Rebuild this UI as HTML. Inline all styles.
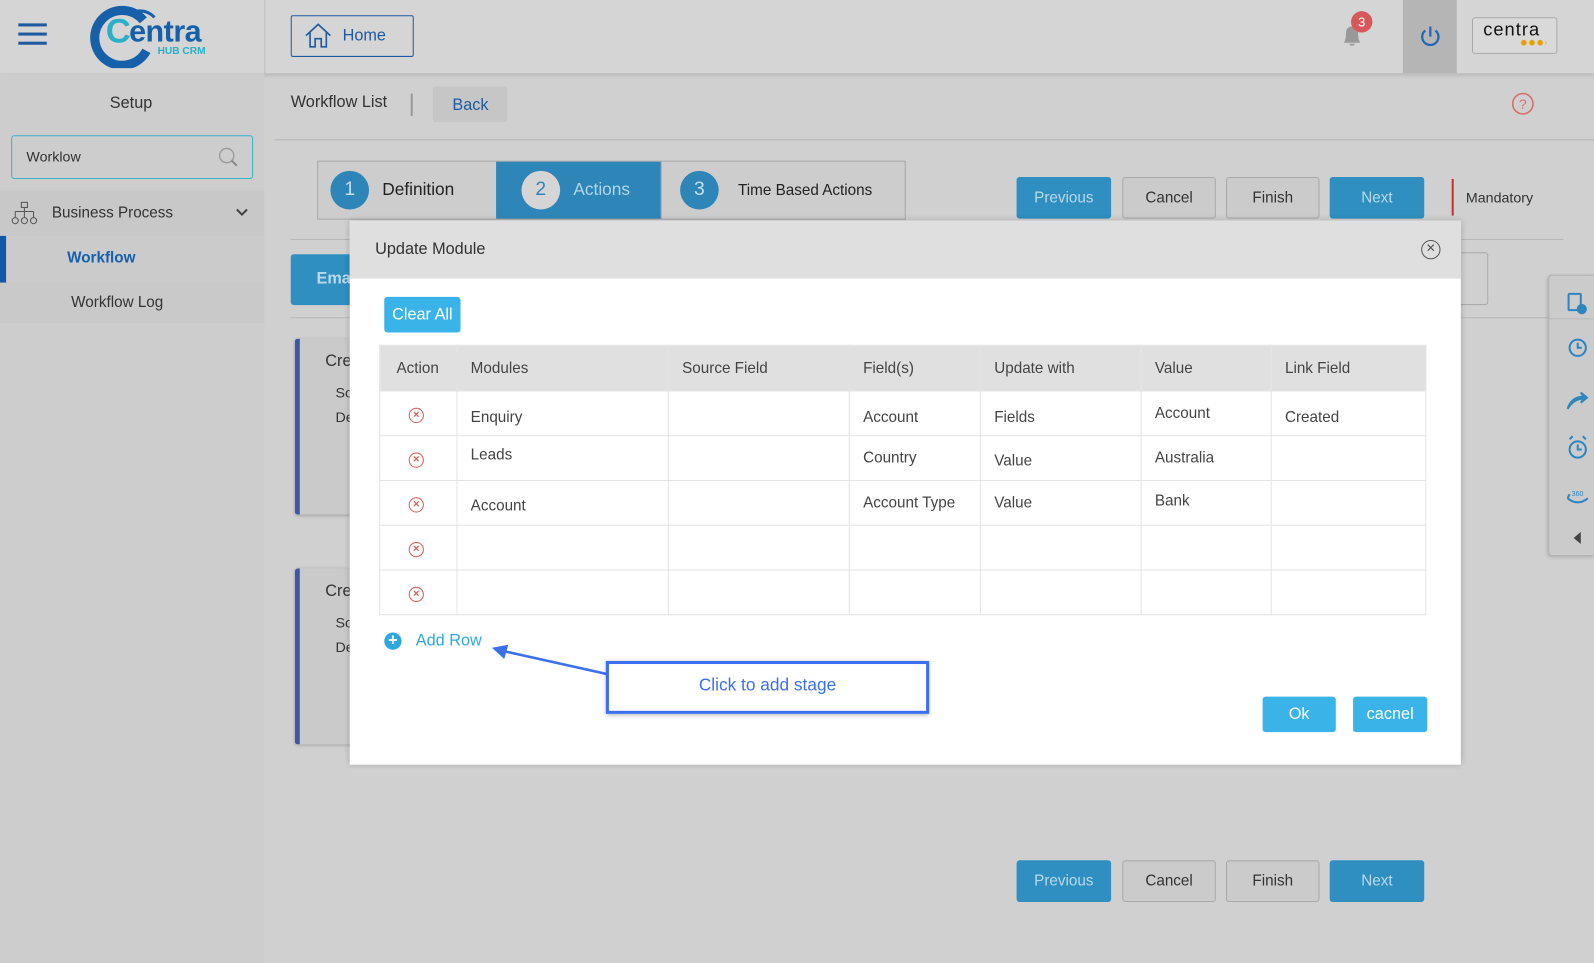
<!DOCTYPE html>
<html><head><meta charset="utf-8">
<style>
*{box-sizing:border-box;margin:0;padding:0}
html,body{width:1594px;height:963px;overflow:hidden;background:#cfcfcf}
body{font-family:"Liberation Sans",sans-serif;color:#333}
#w{position:absolute;left:0;top:0;width:1568px;height:947px;transform:scale(1.01658,1.0169);transform-origin:0 0;background:#d0d0d0}
.a{position:absolute}
.btn{position:absolute;border-radius:3px;font-size:15px;text-align:center}
.bl{background:#2e8fc0;color:#b9d9ea}
.gr{background:#cbcbcb;border:1px solid #a9a9a9;color:#333}
.cb{background:#3ab3e8;color:#fff;border-radius:3px;position:absolute;text-align:center}
table{border-collapse:collapse;position:absolute;left:373px;top:339px;width:1030px;font-size:15px;color:#444}
td,th{border:1px solid #e3e3e3;text-align:left;font-weight:normal;padding:0 0 0 13px}
th{background:#e1e0e1;height:45px}
td{height:44px;background:#fff}
.x{display:inline-block;width:15px;height:15px;border:1.5px solid #e05a4f;border-radius:50%;color:#e05a4f;font-size:11px;line-height:12px;text-align:center;font-weight:bold;margin-left:15px}
</style></head><body><div id="w">
<!-- header -->
<div class="a" style="left:0;top:0;width:1568px;height:72px;background:#d5d5d5;box-shadow:0 2px 4px rgba(0,0,0,.12)"></div>
<div class="a" style="left:260px;top:0;width:1px;height:72px;background:#bdbdbd"></div>
<div class="a" style="left:18px;top:23px;width:28px;height:3px;background:#1f5aa0;box-shadow:0 9px 0 #1f5aa0,0 18px 0 #1f5aa0"></div>
<svg class="a" style="left:86px;top:3px" width="130" height="64"><path d="M55 17 A27 27 0 1 0 58 47" fill="none" stroke="#1560a8" stroke-width="9"/><path d="M42 10 Q56 4 66 14" fill="none" stroke="#1560a8" stroke-width="3"/></svg>
<div class="a" style="left:104px;top:12px;font-size:34px;font-weight:bold;color:#2ab0c8">C</div>
<div class="a" style="left:127px;top:15px;font-size:30px;font-weight:bold;color:#1560a8;letter-spacing:-0.5px">entra</div>
<div class="a" style="left:155px;top:45px;font-size:10px;font-weight:bold;color:#2ab0c8">HUB CRM</div>
<div class="a" style="left:286px;top:15px;width:121px;height:41px;border:1px solid #1f5aa0;border-radius:2px"></div>
<svg class="a" style="left:299px;top:22px" width="28" height="26"><path d="M2 13 L14 2 L26 13 M6 10 V24 H11 V16 H17 V24 H22 V10" fill="none" stroke="#1f5aa0" stroke-width="1.6"/></svg>
<div class="a" style="left:337px;top:27px;font-size:16px;color:#1f5aa0">Home</div>
<svg class="a" style="left:1318px;top:22px" width="24" height="26"><path d="M4 20 Q6 17 6 11 Q6 4 12 4 Q18 4 18 11 Q18 17 20 20 Z M9 21 Q12 25 15 21" fill="#999"/></svg>
<div class="a" style="left:1329px;top:11px;width:21px;height:21px;border-radius:50%;background:#d7585a;color:#fff;font-size:13px;text-align:center;line-height:21px">3</div>
<div class="a" style="left:1380px;top:0;width:53px;height:72px;background:#b5b5b5"></div>
<svg class="a" style="left:1395px;top:24px" width="24" height="24"><path d="M7 6 A8 8 0 1 0 17 6" fill="none" stroke="#1f68b8" stroke-width="2.2"/><path d="M12 2 V12" stroke="#1f68b8" stroke-width="2.2"/></svg>
<div class="a" style="left:1448px;top:17px;width:84px;height:36px;border:1px solid #aaa;border-radius:3px;background:#d9d9d9"></div>
<div class="a" style="left:1459px;top:19px;font-size:18px;color:#111;letter-spacing:1px">centra</div>
<div class="a" style="left:1495px;top:39px;width:26px;height:6px;background:radial-gradient(circle,#e8a000 2.5px,transparent 3px) 0 0/8px 6px"></div>
<!-- sidebar -->
<div class="a" style="left:0;top:72px;width:260px;height:875px;background:#cdcdcd"></div>
<div class="a" style="left:108px;top:93px;font-size:16px">Setup</div>
<div class="a" style="left:11px;top:133px;width:238px;height:43px;border:1px solid #3ab3c8;border-radius:3px"></div>
<div class="a" style="left:26px;top:146px;font-size:14px">Worklow</div>
<svg class="a" style="left:214px;top:144px" width="22" height="22"><circle cx="9" cy="9" r="7" fill="none" stroke="#999" stroke-width="1.3"/><path d="M14 14 L19 19" stroke="#888" stroke-width="2"/></svg>
<div class="a" style="left:0;top:188px;width:260px;height:44px;background:#c8c8c8"></div>
<svg class="a" style="left:11px;top:198px" width="26" height="24"><rect x="10" y="1" width="6" height="5" fill="none" stroke="#555"/><path d="M13 6 V10 M4 10 H22 M4 10 V16 M13 10 V16 M22 10 V16" stroke="#555" fill="none"/><circle cx="4" cy="19" r="3" fill="none" stroke="#555"/><circle cx="13" cy="19" r="3" fill="none" stroke="#555"/><circle cx="22" cy="19" r="3" fill="none" stroke="#555"/></svg>
<div class="a" style="left:51px;top:201px;font-size:15px;color:#333">Business Process</div>
<svg class="a" style="left:232px;top:204px" width="12" height="10"><path d="M1 2 L6 7 L11 2" stroke="#444" stroke-width="2" fill="none"/></svg>
<div class="a" style="left:0;top:232px;width:260px;height:46px;background:#cbcbcb"></div>
<div class="a" style="left:0;top:232px;width:6px;height:46px;background:#1158a8"></div>
<div class="a" style="left:66px;top:245px;font-size:15px;font-weight:bold;color:#1660b0">Workflow</div>
<div class="a" style="left:0;top:278px;width:260px;height:40px;background:#c9c9c9"></div>
<div class="a" style="left:70px;top:289px;font-size:15px">Workflow Log</div>
<!-- main -->
<div class="a" style="left:286px;top:92px;font-size:16px">Workflow List</div>
<div class="a" style="left:404px;top:92px;width:2px;height:22px;background:#999"></div>
<div class="a" style="left:426px;top:85px;width:73px;height:35px;background:#c6c6c6;border-radius:2px"></div>
<div class="a" style="left:445px;top:95px;font-size:16px;color:#1f5aa0">Back</div>
<svg class="a" style="left:1486px;top:90px" width="24" height="24"><circle cx="12" cy="12" r="10" fill="none" stroke="#d87070" stroke-width="1.6"/><text x="12" y="17" font-size="14" text-anchor="middle" fill="#d87070" font-family="Liberation Sans">?</text></svg>
<div class="a" style="left:270px;top:137px;width:1298px;height:1px;background:#b5b5b5"></div>
<!-- steps -->
<div class="a" style="left:312px;top:158px;width:579px;height:58px;border:1px solid #a8a8a8;background:#cdcdcd"></div>
<div class="a" style="left:488px;top:159px;width:162px;height:56px;background:#2e86b8"></div>
<div class="a" style="left:650px;top:159px;width:1px;height:56px;background:#a8a8a8"></div>
<div class="a" style="left:325px;top:168px;width:38px;height:38px;border-radius:50%;background:#2e86b8;color:#c6dfee;font-size:19px;text-align:center;line-height:38px">1</div>
<div class="a" style="left:376px;top:177px;font-size:17px;color:#222">Definition</div>
<div class="a" style="left:513px;top:168px;width:38px;height:38px;border-radius:50%;background:#d5d5d5;color:#2e86b8;font-size:19px;text-align:center;line-height:38px">2</div>
<div class="a" style="left:564px;top:177px;font-size:17px;color:#b0d4ea">Actions</div>
<div class="a" style="left:669px;top:168px;width:38px;height:38px;border-radius:50%;background:#2e86b8;color:#c6dfee;font-size:19px;text-align:center;line-height:38px">3</div>
<div class="a" style="left:726px;top:179px;font-size:15px;color:#222">Time Based Actions</div>
<div class="btn bl" style="left:1000px;top:174px;width:93px;height:41px;line-height:41px">Previous</div>
<div class="btn gr" style="left:1104px;top:174px;width:92px;height:41px;line-height:39px">Cancel</div>
<div class="btn gr" style="left:1206px;top:174px;width:92px;height:41px;line-height:39px">Finish</div>
<div class="btn bl" style="left:1308px;top:174px;width:93px;height:41px;line-height:41px">Next</div>
<div class="a" style="left:1428px;top:176px;width:2px;height:36px;background:#c9302c"></div>
<div class="a" style="left:1442px;top:186px;font-size:14px">Mandatory</div>
<div class="a" style="left:286px;top:235px;width:1252px;height:1px;background:#b8b8b8"></div>
<div class="btn bl" style="left:286px;top:250px;width:80px;height:50px;line-height:50px;font-size:16px;font-weight:bold">&nbsp;Ema</div>
<div class="a" style="left:1400px;top:248px;width:64px;height:52px;border:1px solid #aaa;border-radius:3px"></div>
<div class="a" style="left:286px;top:312px;width:1238px;height:1px;background:#b8b8b8"></div>
<div class="a" style="left:290px;top:333px;width:60px;height:173px;background:#cacaca;border-left:5px solid #3e55a8;border-radius:3px;box-shadow:0 1px 3px rgba(0,0,0,.2)"></div>
<div class="a" style="left:320px;top:347px;font-size:16px">Cre</div>
<div class="a" style="left:330px;top:378px;font-size:14px">So</div>
<div class="a" style="left:330px;top:402px;font-size:14px">De</div>
<div class="a" style="left:290px;top:559px;width:60px;height:173px;background:#cacaca;border-left:5px solid #3e55a8;border-radius:3px;box-shadow:0 1px 3px rgba(0,0,0,.2)"></div>
<div class="a" style="left:320px;top:573px;font-size:16px">Cre</div>
<div class="a" style="left:330px;top:604px;font-size:14px">So</div>
<div class="a" style="left:330px;top:628px;font-size:14px">De</div>
<!-- right strip -->
<div class="a" style="left:1523px;top:270px;width:45px;height:277px;background:#cbcbcb;border:1px solid #b0b0b0;border-right:none;border-radius:4px 0 0 4px;box-shadow:-1px 1px 3px rgba(0,0,0,.15)"></div>
<div class="a" style="left:1524px;top:313px;width:44px;height:1px;background:#b8b8b8"></div>
<svg class="a" style="left:1538px;top:284px" width="26" height="240" fill="none" stroke="#2e86c0" stroke-width="2">
<rect x="5" y="5" width="12" height="16" rx="1"/><circle cx="18" cy="20" r="4" fill="#2e86c0"/>
<circle cx="14" cy="58" r="8"/><path d="M14 53 V58 H18"/>
<path d="M4 118 Q8 106 20 106 L17 102 L23 107 L17 112 L20 108 Q10 108 4 118Z" fill="#2e86c0"/>
<circle cx="14" cy="158" r="8"/><path d="M14 153 V158 H18 M6 148 L9 145 M22 148 L19 145"/>
<path d="M4 206 Q14 214 24 206 M4 206 L6 202" /><text x="8" y="204" font-size="7" fill="#2e86c0" stroke="none">360</text>
</svg>
<div class="a" style="left:1548px;top:523px;width:0;height:0;border:6px solid transparent;border-right:7px solid #444;border-left:none"></div>
<!-- bottom buttons -->
<div class="btn bl" style="left:1000px;top:846px;width:93px;height:41px;line-height:41px">Previous</div>
<div class="btn gr" style="left:1104px;top:846px;width:92px;height:41px;line-height:39px">Cancel</div>
<div class="btn gr" style="left:1206px;top:846px;width:92px;height:41px;line-height:39px">Finish</div>
<div class="btn bl" style="left:1308px;top:846px;width:93px;height:41px;line-height:41px">Next</div>
<!-- modal -->
<div class="a" style="left:344px;top:217px;width:1093px;height:535px;background:#fff;box-shadow:0 0 6px rgba(0,0,0,.2)"></div>
<div class="a" style="left:344px;top:217px;width:1093px;height:57px;background:#e0dfe0"></div>
<div class="a" style="left:369px;top:237px;font-size:16px;color:#333">Update Module</div>
<div class="a" style="left:1398px;top:236px;width:19px;height:19px;border:1.5px solid #555;border-radius:50%;font-size:12px;line-height:15px;text-align:center;color:#555">✕</div>
<div class="cb" style="left:378px;top:292px;width:75px;height:35px;line-height:35px;font-size:16px">Clear All</div>
<table>
<tr><th style="width:76px;padding-left:16px">Action</th><th style="width:208px">Modules</th><th style="width:178px">Source Field</th><th style="width:129px">Field(s)</th><th style="width:158px">Update with</th><th style="width:128px">Value</th><th>Link Field</th></tr>
<tr><td><span class="x">×</span></td><td style="padding-top:8px">Enquiry</td><td></td><td style="padding-top:8px">Account</td><td style="padding-top:8px">Fields</td><td>Account</td><td style="padding-top:8px">Created</td></tr>
<tr><td><span class="x">×</span></td><td style="padding-bottom:6px">Leads</td><td></td><td>Country</td><td style="padding-top:6px">Value</td><td>Australia</td><td></td></tr>
<tr><td><span class="x">×</span></td><td style="padding-top:6px">Account</td><td></td><td>Account Type</td><td>Value</td><td style="padding-bottom:4px">Bank</td><td></td></tr>
<tr><td><span class="x">×</span></td><td></td><td></td><td></td><td></td><td></td><td></td></tr>
<tr><td><span class="x">×</span></td><td></td><td></td><td></td><td></td><td></td><td></td></tr>
</table>
<div class="a" style="left:378px;top:622px;width:17px;height:17px;border-radius:50%;background:#2fa8e0;color:#fff;font-size:16px;font-weight:bold;line-height:17px;text-align:center">+</div>
<div class="a" style="left:409px;top:622px;font-size:16px;color:#2fa8e0">Add Row</div>
<svg class="a" style="left:480px;top:630px" width="120" height="40"><path d="M118 33 L14 10" stroke="#3a6ff0" stroke-width="2.5"/><path d="M4 7 L20 4 L16 18 Z" fill="#3a6ff0"/></svg>
<div class="a" style="left:596px;top:650px;width:318px;height:52px;border:3px solid #3a6ff0;box-shadow:0 1px 4px rgba(0,0,0,.3)"></div>
<div class="a" style="left:596px;top:664px;width:318px;text-align:center;font-size:17px;color:#3a6ff0">Click to add stage</div>
<div class="cb" style="left:1242px;top:685px;width:72px;height:35px;line-height:35px;font-size:16px">Ok</div>
<div class="cb" style="left:1331px;top:685px;width:73px;height:35px;line-height:35px;font-size:16px">cacnel</div>
</div></body></html>
